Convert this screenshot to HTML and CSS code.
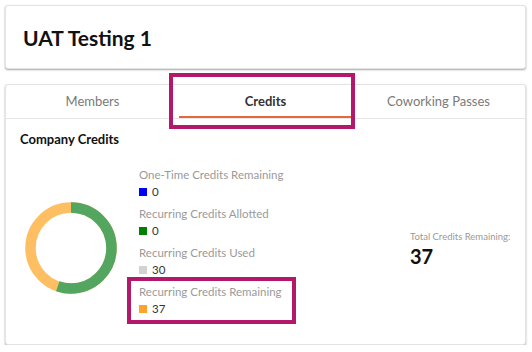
FILE: index.html
```html
<!DOCTYPE html>
<html lang="en">
<head>
    <meta charset="UTF-8">
    <title>UAT Testing 1 - Credits</title>
    <link rel="stylesheet" href="styles.css">
</head>
<body>
    <div class="page">
        <div class="card header-card">
            <h1>UAT Testing 1</h1>
        </div>

        <div class="card tabs-card">
            <div class="tabs">
                <div class="tab">Members</div>
                <div class="tab active">Credits</div>
                <div class="tab">Coworking Passes</div>
            </div>

            <div class="content">
                <h2>Company Credits</h2>
                <div class="credits-row">
                    <div class="donut">
                        <svg width="92" height="92" viewBox="0 0 92 92">
                            <!-- circumference of r=40.5 is ~254.5 -->
                            <circle cx="46" cy="46" r="40.5" fill="none" stroke="#fdbf62" stroke-width="10.5"></circle>
                            <circle cx="46" cy="46" r="40.5" fill="none" stroke="#52a660" stroke-width="10.5"
                                stroke-dasharray="140.5 254.5" transform="rotate(-90 46 46)"></circle>
                        </svg>
                    </div>

                    <div class="legend">
                        <div class="legend-item">
                            <div class="legend-label">One-Time Credits Remaining</div>
                            <div class="legend-value"><span class="swatch blue"></span>0</div>
                        </div>
                        <div class="legend-item">
                            <div class="legend-label">Recurring Credits Allotted</div>
                            <div class="legend-value"><span class="swatch green"></span>0</div>
                        </div>
                        <div class="legend-item">
                            <div class="legend-label">Recurring Credits Used</div>
                            <div class="legend-value"><span class="swatch grey"></span>30</div>
                        </div>
                        <div class="legend-item">
                            <div class="legend-label">Recurring Credits Remaining</div>
                            <div class="legend-value"><span class="swatch orange"></span>37</div>
                        </div>
                    </div>

                    <div class="total">
                        <div class="total-label">Total Credits Remaining:</div>
                        <div class="total-value">37</div>
                    </div>
                </div>
            </div>
        </div>

        <div class="highlight highlight-tab"></div>
        <div class="highlight highlight-remaining"></div>
    </div>
</body>
</html>
```

FILE: styles.css
```css
body {
    margin: 0;
    background: #fff;
    font-family: Lato, "Noto Sans", Arial, sans-serif;
    color: #222;
}
.page {
    position: relative;
    padding: 5px 6px 0 5px;
}
.card {
    background: #fff;
    border: 1px solid #e3e3e3;
    border-radius: 3px;
    box-shadow: 0 1px 2px rgba(0, 0, 0, 0.35);
}
.header-card {
    height: 62px;
    display: flex;
    align-items: center;
    padding-left: 17px;
}
.header-card h1 {
    margin: 0;
    font-size: 21px;
    font-weight: bold;
    color: #111;
}
.tabs-card {
    margin-top: 15px;
    height: 259px;
}
.tabs {
    display: grid;
    grid-template-columns: 1fr 1fr 1fr;
    height: 33px;
    border-bottom: 1px solid #e6e6e6;
}
.tab {
    display: flex;
    align-items: center;
    justify-content: center;
    font-size: 13px;
    color: #7a7a7a;
    padding-bottom: 2px;
}
.tab.active {
    color: #333;
    font-weight: bold;
    border-bottom: 2px solid #e0693f;
    padding-bottom: 0;
}
.content {
    padding: 12px 14px 0 14px;
}
.content h2 {
    margin: 0;
    font-size: 13px;
    font-weight: bold;
    color: #111;
}
.credits-row {
    display: flex;
    align-items: center;
    margin-top: 21px;
}
.donut {
    width: 92px;
    height: 92px;
    margin: 4px 0 0 5px;
}
.legend {
    margin-left: 22px;
    width: 270px;
}
.legend-item {
    height: 39px;
}
.legend-label {
    font-size: 11.5px;
    color: #9a9a9a;
    line-height: 13px;
}
.legend-value {
    display: flex;
    align-items: center;
    margin-top: 4px;
    font-size: 11.5px;
    line-height: 13px;
    color: #333;
}
.swatch {
    width: 8px;
    height: 8px;
    margin-right: 5px;
}
.blue { background: #0000ff; }
.green { background: #008000; }
.grey { background: #d3d3d3; }
.orange { background: #ffa42a; }
.total {
    margin-left: 1px;
    margin-top: 6px;
}
.total-label {
    font-size: 9.5px;
    color: #9a9a9a;
}
.total-value {
    font-size: 20px;
    font-weight: bold;
    color: #111;
    margin-top: 2px;
}
.highlight {
    position: absolute;
    border: 4px solid #b3186a;
}
.highlight-tab {
    left: 169px;
    top: 73px;
    width: 178px;
    height: 48px;
}
.highlight-remaining {
    left: 127px;
    top: 277px;
    width: 161px;
    height: 39px;
}
```
